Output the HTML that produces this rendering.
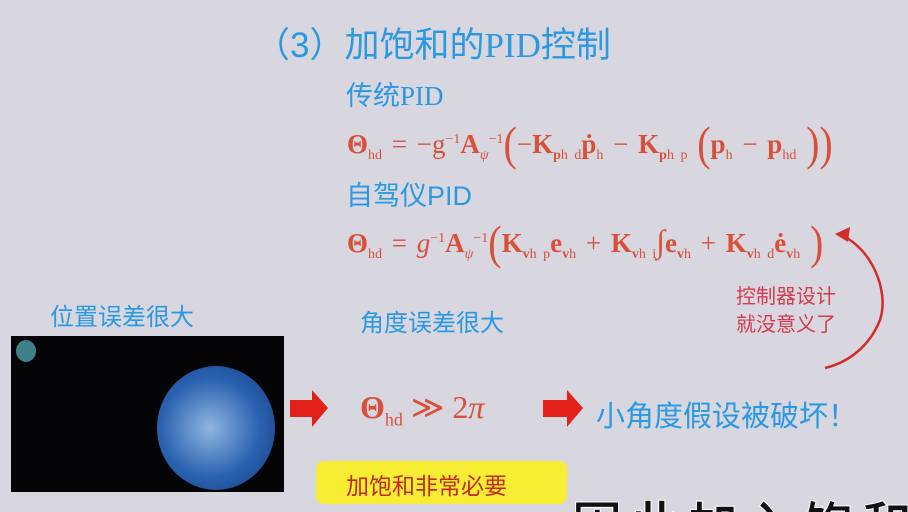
<!DOCTYPE html>
<html><head><meta charset="utf-8"><style>
*{margin:0;padding:0}
html,body{width:908px;height:512px;overflow:hidden}
body{background:#d8d7e0;position:relative;font-family:"Liberation Sans","Noto Sans CJK SC",sans-serif}
.a{position:absolute;white-space:nowrap}
.b{color:#2b98e2}
.f{font-family:"Liberation Serif","Noto Serif CJK SC",serif;color:#d9503a;font-size:27px;word-spacing:3px}
.f b{font-weight:bold}
.f sub{font-size:14px;vertical-align:-6px}
.f sup{font-size:14px;vertical-align:10px}
.p{font-size:40px;font-weight:100;transform:scaleY(1.2);display:inline-block;vertical-align:-4px}
</style></head><body>
<div class="a b" style="left:255px;top:17px;font-size:35px">（3）加饱和的<span style="font-family:'Liberation Serif',serif">PID</span>控制</div>
<div class="a b" style="left:346px;top:74px;font-size:27px">传统<span style="font-family:'Liberation Serif',serif">PID</span></div>
<div class="a f" style="left:347px;top:120px"><b>Θ</b><sub>hd</sub> = −g<sup>−1</sup><b>A</b><sub><i>ψ</i></sub><sup>−1</sup><span class="p">(</span>−<b>K</b><sub><b>p</b>h d</sub><b>ṗ</b><sub>h</sub> − <b>K</b><sub><b>p</b>h p</sub> <span class="p">(</span><b>p</b><sub>h</sub> − <b>p</b><sub>hd</sub> <span class="p">))</span></div>
<div class="a b" style="left:346px;top:174px;font-size:27px">自驾仪<span style="font-family:'Liberation Sans',sans-serif">PID</span></div>
<div class="a f" style="left:347px;top:219px"><b>Θ</b><sub>hd</sub> = <i>g</i><sup>−1</sup><b>A</b><sub><i>ψ</i></sub><sup>−1</sup><span class="p">(</span><b>K</b><sub><b>v</b>h p</sub><b>e</b><sub><b>v</b>h</sub> + <b>K</b><sub><b>v</b>h i</sub><span style="font-size:32px">∫</span><b>e</b><sub><b>v</b>h</sub> + <b>K</b><sub><b>v</b>h d</sub><b>ė</b><sub><b>v</b>h</sub> <span class="p">)</span></div>
<svg class="a" style="left:0;top:0" width="908" height="512"><path d="M838 234 C870 245,890 290,880 320 C870 345,850 362,825 368" fill="none" stroke="#d52a2a" stroke-width="2.5"/><polygon points="835,234 850,227 848,242" fill="#d52a2a"/>
<polygon points="290,400 312,400 312,390 328,408 312,427 312,417 290,417" fill="#e3211b"/>
<polygon points="543,400 567,400 567,390 583,408 567,427 567,417 543,417" fill="#e3211b"/></svg>
<div class="a" style="left:736px;top:283px;font-size:20px;color:#d63a4c;line-height:28px">控制器设计<br>就没意义了</div>
<div class="a b" style="left:50px;top:297px;font-size:24px">位置误差很大</div>
<div class="a b" style="left:360px;top:303px;font-size:24px">角度误差很大</div>
<div class="a" style="left:11px;top:336px;width:273px;height:156px;background:#050507;overflow:hidden">
<div class="a" style="left:5px;top:4px;width:20px;height:22px;border-radius:50%;background:#3f7f8a"></div>
<div class="a" style="left:146px;top:30px;width:118px;height:124px;border-radius:50%;background:radial-gradient(circle at 45% 50%,#8fb6e0,#2a62b0 55%,#143a7a)"></div>
</div>
<div class="a" style="left:360px;top:388px;font-family:'Liberation Serif',serif;color:#d9503a;font-size:32px"><b>Θ</b><sub style="font-size:18px">hd</sub> ≫ 2<i>π</i></div>
<div class="a b" style="left:596px;top:393px;font-size:29px">小角度假设被破坏！</div>
<div class="a" style="left:316px;top:461px;width:251px;height:43px;background:#f7ee33;border-radius:8px"></div>
<div class="a" style="left:346px;top:467px;font-size:23px;color:#c42a1c">加饱和非常必要</div>
<div class="a" style="left:560px;top:490px;width:348px;height:22px;overflow:hidden">
<div class="a" style="left:12px;top:-4px;font-size:50px;font-weight:bold;color:#111;-webkit-text-stroke:1px #fff;letter-spacing:8px">因此加入饱和</div>
</div>
</body></html>
